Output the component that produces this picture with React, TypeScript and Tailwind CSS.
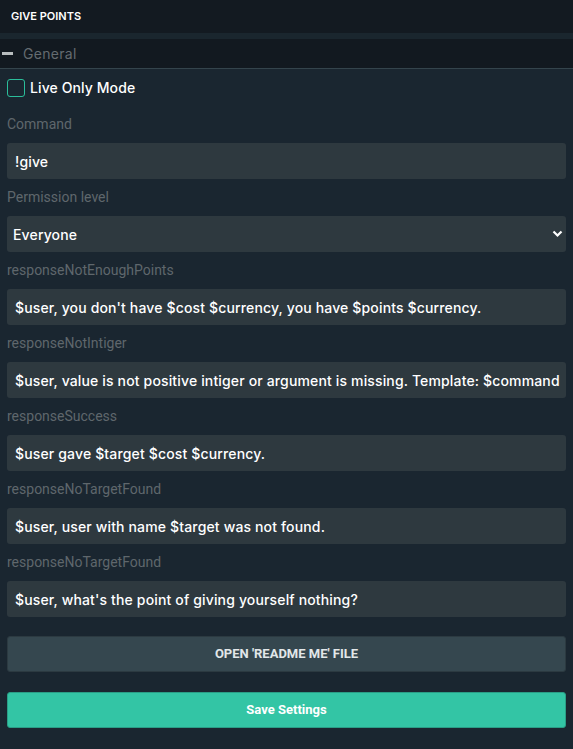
import React from "react";

const fields: { label: string; value: string }[] = [
  { label: "responseNotEnoughPoints", value: "$user, you don't have $cost $currency, you have $points $currency." },
  { label: "responseNotIntiger", value: "$user, value is not positive intiger or argument is missing. Template: $command" },
  { label: "responseSuccess", value: "$user gave $target $cost $currency." },
  { label: "responseNoTargetFound", value: "$user, user with name $target was not found." },
  { label: "responseNoTargetFound", value: "$user, what's the point of giving yourself nothing?" },
];

const inputFont = { fontFamily: "Inter, 'Open Sans', sans-serif" };
const labelFont = { fontFamily: "Roboto, 'Liberation Sans', sans-serif" };

function Label({ children }: { children: React.ReactNode }) {
  return (
    <div className="h-[37px] flex items-center px-[7px] text-[14px] text-[#5f676c]" style={labelFont}>
      {children}
    </div>
  );
}

function TextBox({ value }: { value: string }) {
  return (
    <div className="mx-[7px] h-[36px] rounded-[3px] bg-[#2e393f] flex items-center px-[8px] overflow-hidden">
      <span className="whitespace-nowrap text-[14px] text-white font-medium tracking-[0.15px]" style={inputFont}>
        {value}
      </span>
    </div>
  );
}

export default function App() {
  return (
    <div className="w-[573px] h-[749px] bg-[#1a2630] flex flex-col overflow-hidden">
      <div className="h-[33px] bg-[#131a21] flex items-center px-[11px]">
        <span className="text-[11px] text-white font-semibold" style={inputFont}>
          GIVE POINTS
        </span>
      </div>
      <div className="h-[6px] bg-[#1a262e]" />
      <div className="h-[30px] bg-[#121920] border-b border-[#34444c] flex items-center">
        <div className="ml-[2px] w-[11px] h-[3px] bg-[#b8bdbf]" />
        <span className="ml-[10px] text-[14px] text-[#646b70] tracking-[0.3px]" style={inputFont}>
          General
        </span>
      </div>
      <div className="flex items-center h-[37px] px-[7px]">
        <div className="w-[18px] h-[18px] rounded-[3px] border border-[#2bbd9a]" />
        <span className="ml-[5px] text-[14px] text-white font-medium tracking-[0.1px]" style={inputFont}>
          Live Only Mode
        </span>
      </div>
      <Label>Command</Label>
      <TextBox value="!give" />
      <Label>Permission level</Label>
      <div className="mx-[7px] h-[36px] rounded-[3px] bg-[#2e393f] flex items-center pl-[6px] pr-[3px]">
        <span className="flex-1 text-[14px] text-white font-medium tracking-[0.15px]" style={inputFont}>
          Everyone
        </span>
        <svg width="11" height="8" viewBox="0 0 11 8">
          <path d="M1.5 1.5 L5.5 5.5 L9.5 1.5" stroke="white" strokeWidth="2.2" fill="none" />
        </svg>
      </div>
      {fields.map((f, i) => (
        <React.Fragment key={i}>
          <Label>{f.label}</Label>
          <TextBox value={f.value} />
        </React.Fragment>
      ))}
      <div className="mt-[19px] mx-[7px] h-[36px] rounded-[3px] bg-[#35474f] border border-[#2c3a41] flex items-center justify-center">
        <span className="text-[13px] font-bold text-[#e2e7e9]" style={labelFont}>
          OPEN 'README ME' FILE
        </span>
      </div>
      <div className="mt-[20px] mx-[7px] h-[36px] rounded-[3px] bg-[#33c5a5] border border-[#2a9e86] flex items-center justify-center">
        <span className="text-[13px] font-bold text-white" style={labelFont}>
          Save Settings
        </span>
      </div>
    </div>
  );
}
